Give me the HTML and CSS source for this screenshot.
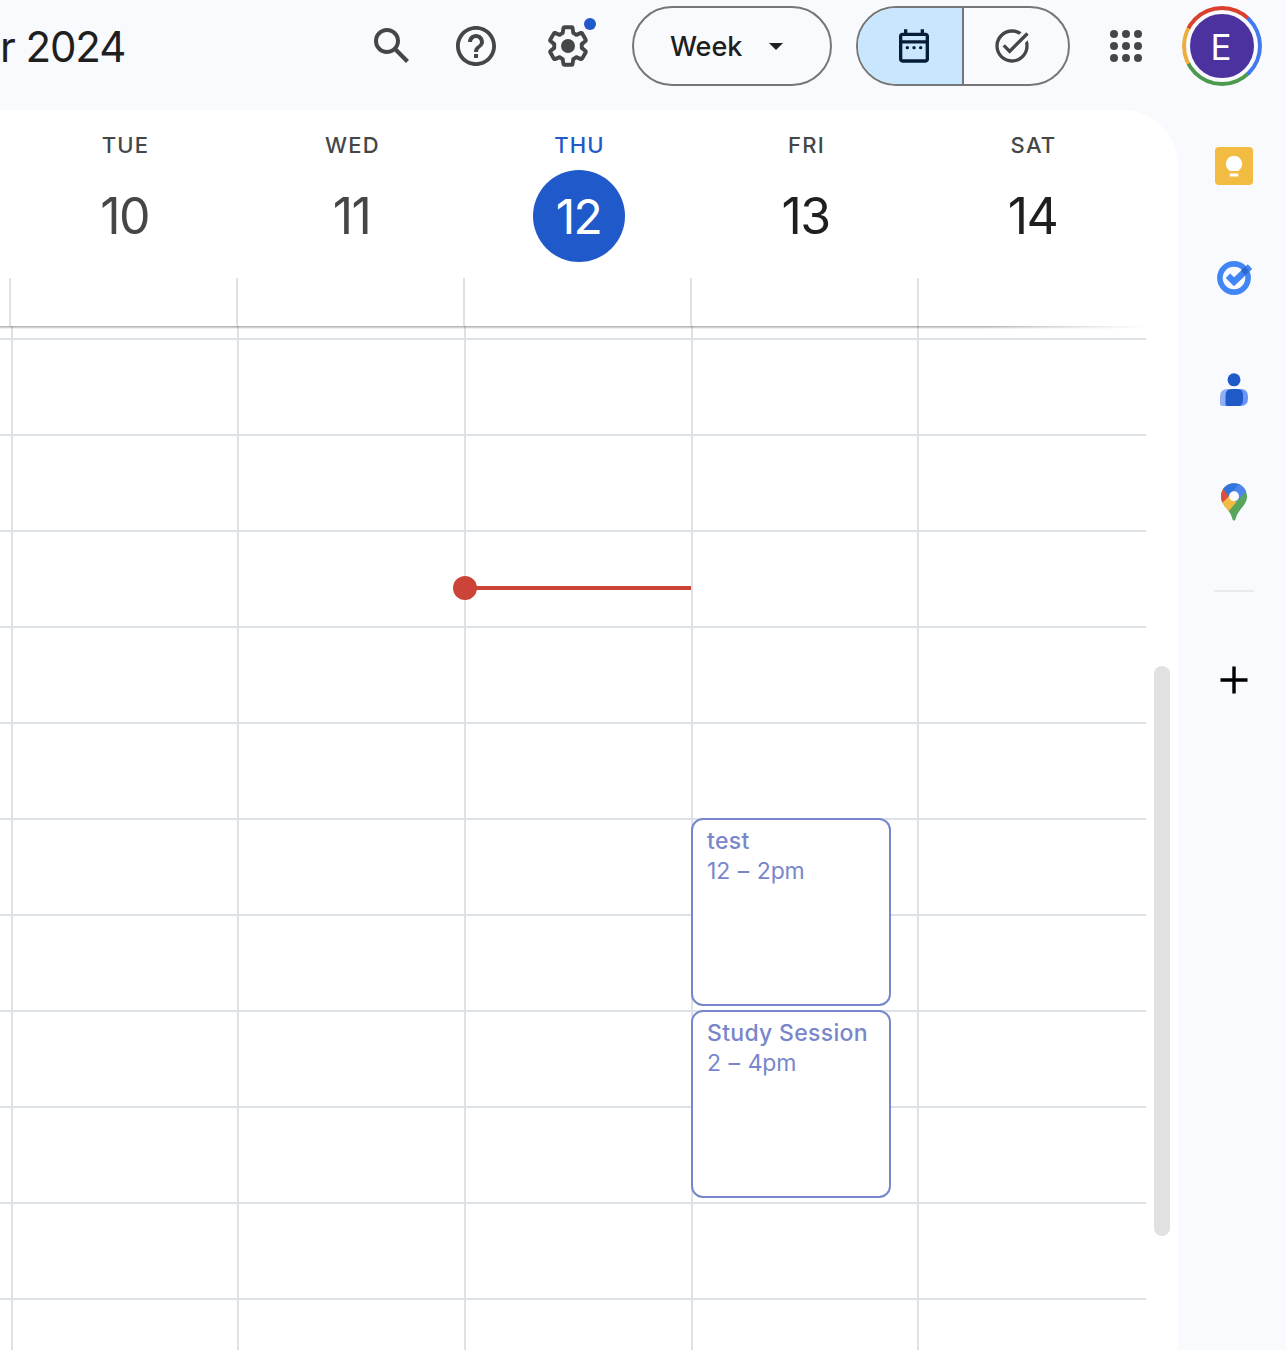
FILE: index.html
```html
<!DOCTYPE html>
<html lang="en">
<head>
<meta charset="utf-8">
<title>Calendar</title>
<link rel="stylesheet" href="styles.css">
</head>
<body>
<header class="topbar">
  <h1 class="period">r 2024</h1>
  <svg class="icon" viewBox="0 0 24 24"><path d="M20.49 19l-5.73-5.73C15.53 12.2 16 10.91 16 9.5A6.5 6.5 0 1 0 9.5 16c1.41 0 2.7-.47 3.77-1.24L19 20.49 20.49 19zM5 9.5C5 7.01 7.01 5 9.5 5S14 7.01 14 9.5 11.99 14 9.5 14 5 11.99 5 9.5z"/></svg>
  <svg class="icon help" viewBox="0 0 24 24"><path d="M11 18h2v-2h-2v2zm1-16C6.480 2 2 6.480 2 12s4.480 10 10 10 10-4.480 10-10S17.520 2 12 2zm0 18.100c-4.470 0-8.100-3.630-8.100-8.100S7.530 3.900 12 3.900s8.100 3.630 8.100 8.100-3.630 8.100-8.100 8.100zM12 6c-2.210 0-4 1.790-4 4h2c0-1.100.9-2 2-2s2 .9 2 2c0 2-3 1.750-3 5h2c0-2.250 3-2.500 3-5 0-2.210-1.790-4-4-4z"/></svg>
  <div class="settings">
    <svg class="icon" viewBox="0 0 24 24"><g transform="translate(12 12) scale(.92 .94) translate(-12 -12)"><path class="gear" d="M19.43 12.98c.04-.32.07-.64.07-.98s-.03-.66-.07-.98l2.11-1.65c.19-.15.24-.42.12-.64l-2-3.46c-.09-.16-.26-.25-.44-.25-.06 0-.12.01-.17.03l-2.49 1c-.52-.4-1.08-.73-1.69-.98l-.38-2.65C14.46 2.18 14.25 2 14 2h-4c-.25 0-.46.18-.49.42l-.38 2.65c-.61.25-1.17.59-1.69.98l-2.49-1c-.06-.02-.12-.03-.18-.03-.17 0-.34.09-.43.25l-2 3.46c-.13.22-.07.49.12.64l2.11 1.65c-.04.32-.07.65-.07.98s.03.66.07.98l-2.11 1.65c-.19.15-.24.42-.12.64l2 3.46c.09.16.26.25.44.25.06 0 .12-.01.17-.03l2.49-1c.52.4 1.08.73 1.69.98l.38 2.65c.03.24.24.42.49.42h4c.25 0 .46-.18.49-.42l.38-2.65c.61-.25 1.17-.59 1.69-.98l2.49 1c.06.02.12.03.18.03.17 0 .34-.09.43-.25l2-3.46c.12-.22.07-.49-.12-.64l-2.11-1.65z"/></g><circle cx="12" cy="12" r="3.5"/></svg>
    <span class="badge"></span>
  </div>
  <button class="view-button"><span>Week</span><svg class="caret" viewBox="0 0 14 7"><path d="M0 0h14L7 7z"/></svg></button>
  <div class="toggle">
    <div class="toggle-half selected"><svg viewBox="0 0 24 24"><path d="M19 4h-1V2h-2v2H8V2H6v2H5c-1.11 0-2 .9-2 2v14c0 1.1.89 2 2 2h14c1.1 0 2-.9 2-2V6c0-1.1-.9-2-2-2zm0 16H5V10.500h14V20zm0-11.500H5V6h14v2.500z"/><circle cx="8" cy="13" r="1"/><circle cx="12" cy="13" r="1"/><circle cx="16" cy="13" r="1"/></svg></div>
    <div class="toggle-half"><svg viewBox="0 0 24 24"><path d="M22 5.18L10.59 16.6l-4.24-4.24 1.41-1.41 2.83 2.83 10-10L22 5.18zM12 20c-4.41 0-8-3.59-8-8s3.59-8 8-8c1.57 0 3.04.46 4.28 1.25l1.45-1.45C16.1 2.67 14.13 2 12 2 6.48 2 2 6.48 2 12s4.48 10 10 10 10-4.48 10-10c0-1.19-.22-2.33-.6-3.39l-1.6 1.6c.13.58.2 1.18.2 1.79 0 4.41-3.59 8-8 8z"/></svg></div>
  </div>
  <svg class="icon apps" viewBox="0 0 24 24"><circle cx="6" cy="6" r="2"/><circle cx="12" cy="6" r="2"/><circle cx="18" cy="6" r="2"/><circle cx="6" cy="12" r="2"/><circle cx="12" cy="12" r="2"/><circle cx="18" cy="12" r="2"/><circle cx="6" cy="18" r="2"/><circle cx="12" cy="18" r="2"/><circle cx="18" cy="18" r="2"/></svg>
  <div class="avatar"><span>E</span></div>
</header>
<div class="workspace">
  <main class="calendar">
    <div class="day-heads">
      <div class="day"><span class="name">TUE</span><span class="number">10</span></div>
      <div class="day"><span class="name">WED</span><span class="number">11</span></div>
      <div class="day today"><span class="name">THU</span><span class="number">12</span></div>
      <div class="day future"><span class="name">FRI</span><span class="number">13</span></div>
      <div class="day future"><span class="name">SAT</span><span class="number">14</span></div>
    </div>
    <div class="all-day"><div></div><div></div><div></div><div></div><div></div></div>
    <div class="scroll-area">
      <div class="hours">
        <div class="col"></div>
        <div class="col"></div>
        <div class="col"><div class="now"></div></div>
        <div class="col">
          <article class="event first"><strong>test</strong><span>12 – 2pm</span></article>
          <article class="event second"><strong>Study Session</strong><span>2 – 4pm</span></article>
        </div>
        <div class="col"></div>
      </div>
      <div class="divider"></div>
      <div class="track"><div class="thumb"></div></div>
    </div>
  </main>
  <aside class="side">
    <svg viewBox="0 0 40 40"><rect x="1" y="1" width="38" height="38" rx="4" fill="#f2bc42"/><path fill="#fff" d="M20 9.700a8.200 8.200 0 0 0-5 14.600q.7.700 1.500.700h7q.8 0 1.500-.700a8.200 8.200 0 0 0-5-14.600zM15.800 27.500h8.500v3h-8.500z"/></svg>
    <svg viewBox="0 0 40 40"><circle cx="20" cy="20" r="14.100" fill="none" stroke="#4285f4" stroke-width="5.600"/><path d="M14 17.800l6 6L36 8.600" fill="none" stroke="#4285f4" stroke-width="6.400" stroke-linejoin="miter"/><path d="M27 12.600l4.200-4 3.800 4.600-4.200 4z" fill="#2868d0"/></svg>
    <svg viewBox="0 0 40 40"><circle cx="20" cy="9.800" r="6.500" fill="#1f5bc8"/><path fill="#91aff5" d="M13.500 19H26v17H8q-2 0-2-2v-7.500Q6 19 13.500 19z"/><path fill="#6a94f5" d="M20 19h6.500q7.500 0 7.500 7.500v2q0 7.500-7.500 7.500H20z"/><path fill="#1f5bc8" d="M18 19h5.500q5.500 0 5.500 6v5q0 6-5.500 6H13q-1.500 0-1.500-2v-9q0-6 6.500-6z"/></svg>
    <svg viewBox="0 0 40 40"><defs><clipPath id="pin"><path d="M20 1.200C12.500 1.200 7 7.200 7 14.400c0 5 2.500 8 6.500 13.200 3 3.700 4.200 6.700 5 9.700.5 1.700 2.500 1.700 3 0 .8-3 2-6 5-9.700C30.500 22.400 33 19.400 33 14.400 33 7.200 27.500 1.200 20 1.200z"/></clipPath></defs><g clip-path="url(#pin)"><path fill="#58a55c" d="M0 0h40v40H0z"/><path fill="#f2bc42" d="M0 26L14 10l10 8-10 12z"/><path fill="#d85140" d="M0 0h8l10.500 11L4 25z"/><path fill="#3174e0" d="M8 0h20v2L15.500 15 7 4z"/><path fill="#5086ec" d="M26 0h14v2L22 20l-6-6z"/></g><circle cx="20" cy="14.300" r="5" fill="#fff"/></svg>
    <div class="rule"></div>
    <svg class="plus" viewBox="0 0 40 40"><path d="M20 6.500v27M6.500 20h27" stroke="#000" stroke-width="3.400"/></svg>
  </aside>
</div>
</body>
</html>
```
FILE: styles.css
```css
* { box-sizing: border-box; }
body {
  margin: 0;
  width: 1286px;
  height: 1350px;
  overflow: hidden;
  background: #f9fafe;
  color: #1f1f1f;
  font-family: Inter, "Liberation Sans", sans-serif;
}
svg { display: block; flex: none; }

/* Top bar */
.topbar { display: flex; align-items: flex-start; height: 110px; padding-top: 6px; }
.period {
  width: 368px;
  margin: 0;
  font-size: 42px;
  line-height: 81px;
  font-weight: 400;
  letter-spacing: -1.1px;
  white-space: pre;
}
.icon { width: 48px; height: 48px; margin-top: 16px; fill: #444746; }
.help { margin-left: 36px; }
.settings { position: relative; margin-left: 44px; }
.icon .gear { fill: none; stroke: #444746; stroke-width: 2.100; stroke-linejoin: round; }
.badge {
  position: absolute;
  right: -4px;
  top: 12px;
  width: 12px;
  height: 12px;
  border-radius: 50%;
  background: #2059c9;
}
.view-button {
  display: flex;
  align-items: center;
  width: 200px;
  height: 80px;
  margin-left: 40px;
  padding: 0 36px;
  border: 2px solid #747775;
  border-radius: 40px;
  background: transparent;
  color: #1f1f1f;
  font: 500 27px/1 Inter, sans-serif;
  letter-spacing: -.1px;
}
.view-button span { width: 99px; text-align: left; }
.caret { width: 14px; height: 7px; fill: #1f1f1f; }
.toggle {
  display: flex;
  width: 214px;
  height: 80px;
  margin-left: 24px;
  border: 2px solid #747775;
  border-radius: 40px;
  overflow: hidden;
}
.toggle-half { display: flex; flex: 1; align-items: center; padding-left: 28px; }
.toggle-half svg { width: 40px; height: 40px; fill: #444746; }
.selected { flex: 0 0 106px; padding-left: 36px; background: #c8e7fe; border-right: 2px solid #747775; }
.selected svg { fill: #061d35; }
.apps { margin-left: 32px; }
.avatar {
  display: flex;
  width: 80px;
  height: 80px;
  margin-left: 32px;
  padding: 4px;
  border-radius: 50%;
  background: conic-gradient(#d9412e 0 42deg, #4279ec 42deg 138deg, #4d9950 138deg 242deg, #ecae3f 242deg 298deg, #d9412e 298deg);
}
.avatar span {
  flex: 1;
  border: 4px solid #f9fafe;
  border-radius: 50%;
  background: #4b329f;
  color: #fff;
  font: 400 35px/66px Inter, sans-serif;
  text-align: center;
  text-indent: -2px;
}

/* Calendar surface */
.workspace { display: flex; height: 1240px; }
.calendar { display: flex; flex-direction: column; width: 1178px; background: #fff; border-top-right-radius: 56px; }
.day-heads { display: grid; grid-template-columns: repeat(5, 227px); height: 168px; padding-left: 11px; }
.day { display: flex; flex-direction: column; align-items: center; padding-top: 21px; color: #444746; }
.name { padding-left: 2px; font-size: 22px; line-height: 28px; font-weight: 500; letter-spacing: 1.2px; }
.number {
  width: 92px;
  height: 92px;
  margin-top: 11px;
  border-radius: 50%;
  font-size: 50px;
  line-height: 92px;
  letter-spacing: -1.6px;
  text-align: center;
}
.future .number { color: #1f1f1f; }
.today .name { color: #2059c9; }
.today .number { background: #2059c9; color: #fff; font-size: 48px; line-height: 93px; }
.all-day { display: grid; grid-template-columns: repeat(5, 227px); height: 48px; padding-left: 9px; }
.all-day div { border-left: 2px solid #dde1e8; }
.scroll-area { position: relative; display: flex; flex: 1; }
.hours {
  display: grid;
  grid-template-columns: 226px 227px 227px 226px 229px;
  width: 1146px;
  padding-left: 11px;
  background: repeating-linear-gradient(#dde1e8 0 2px, transparent 2px 96px) 0 12px no-repeat;
}
.col { position: relative; border-left: 2px solid #dde1e8; }
.divider {
  position: absolute;
  left: 0;
  top: 0;
  width: 1146px;
  height: 3px;
  background: linear-gradient(rgba(68, 71, 70, .38) 0 1px, rgba(68, 71, 70, .25) 1px 2px, rgba(68, 71, 70, .08) 2px);
  mask-image: linear-gradient(to right, #000 86%, transparent);
}
.now {
  position: absolute;
  left: 0;
  top: 260px;
  width: 225px;
  height: 4px;
  background: #cb4437;
}
.now::before {
  content: "";
  position: absolute;
  left: -13px;
  top: -10px;
  width: 24px;
  height: 24px;
  border-radius: 50%;
  background: #cb4437;
}
.event {
  position: absolute;
  left: -2px;
  width: 200px;
  height: 188px;
  padding: 6px 14px;
  border: 2px solid #7986cb;
  border-radius: 12px;
  background: #fff;
  color: #7986cb;
  font-size: 23px;
  line-height: 30px;
  white-space: nowrap;
}
.event strong, .event span { display: block; }
.event strong { font-weight: 500; letter-spacing: .3px; }
.event span { letter-spacing: -.2px; word-spacing: 1.5px; }
.first { top: 492px; }
.second { top: 684px; }
.track { width: 32px; padding: 340px 8px 0; }
.thumb { height: 570px; border-radius: 8px; background: #e1e1e1; }

/* Side panel */
.side { display: flex; flex-direction: column; gap: 72px; width: 108px; padding: 36px 0 0 36px; }
.side svg { width: 40px; height: 40px; }
.rule { width: 40px; height: 2px; margin-top: -4px; background: #e8eaed; }
.side .plus { margin-top: -4px; }
```
